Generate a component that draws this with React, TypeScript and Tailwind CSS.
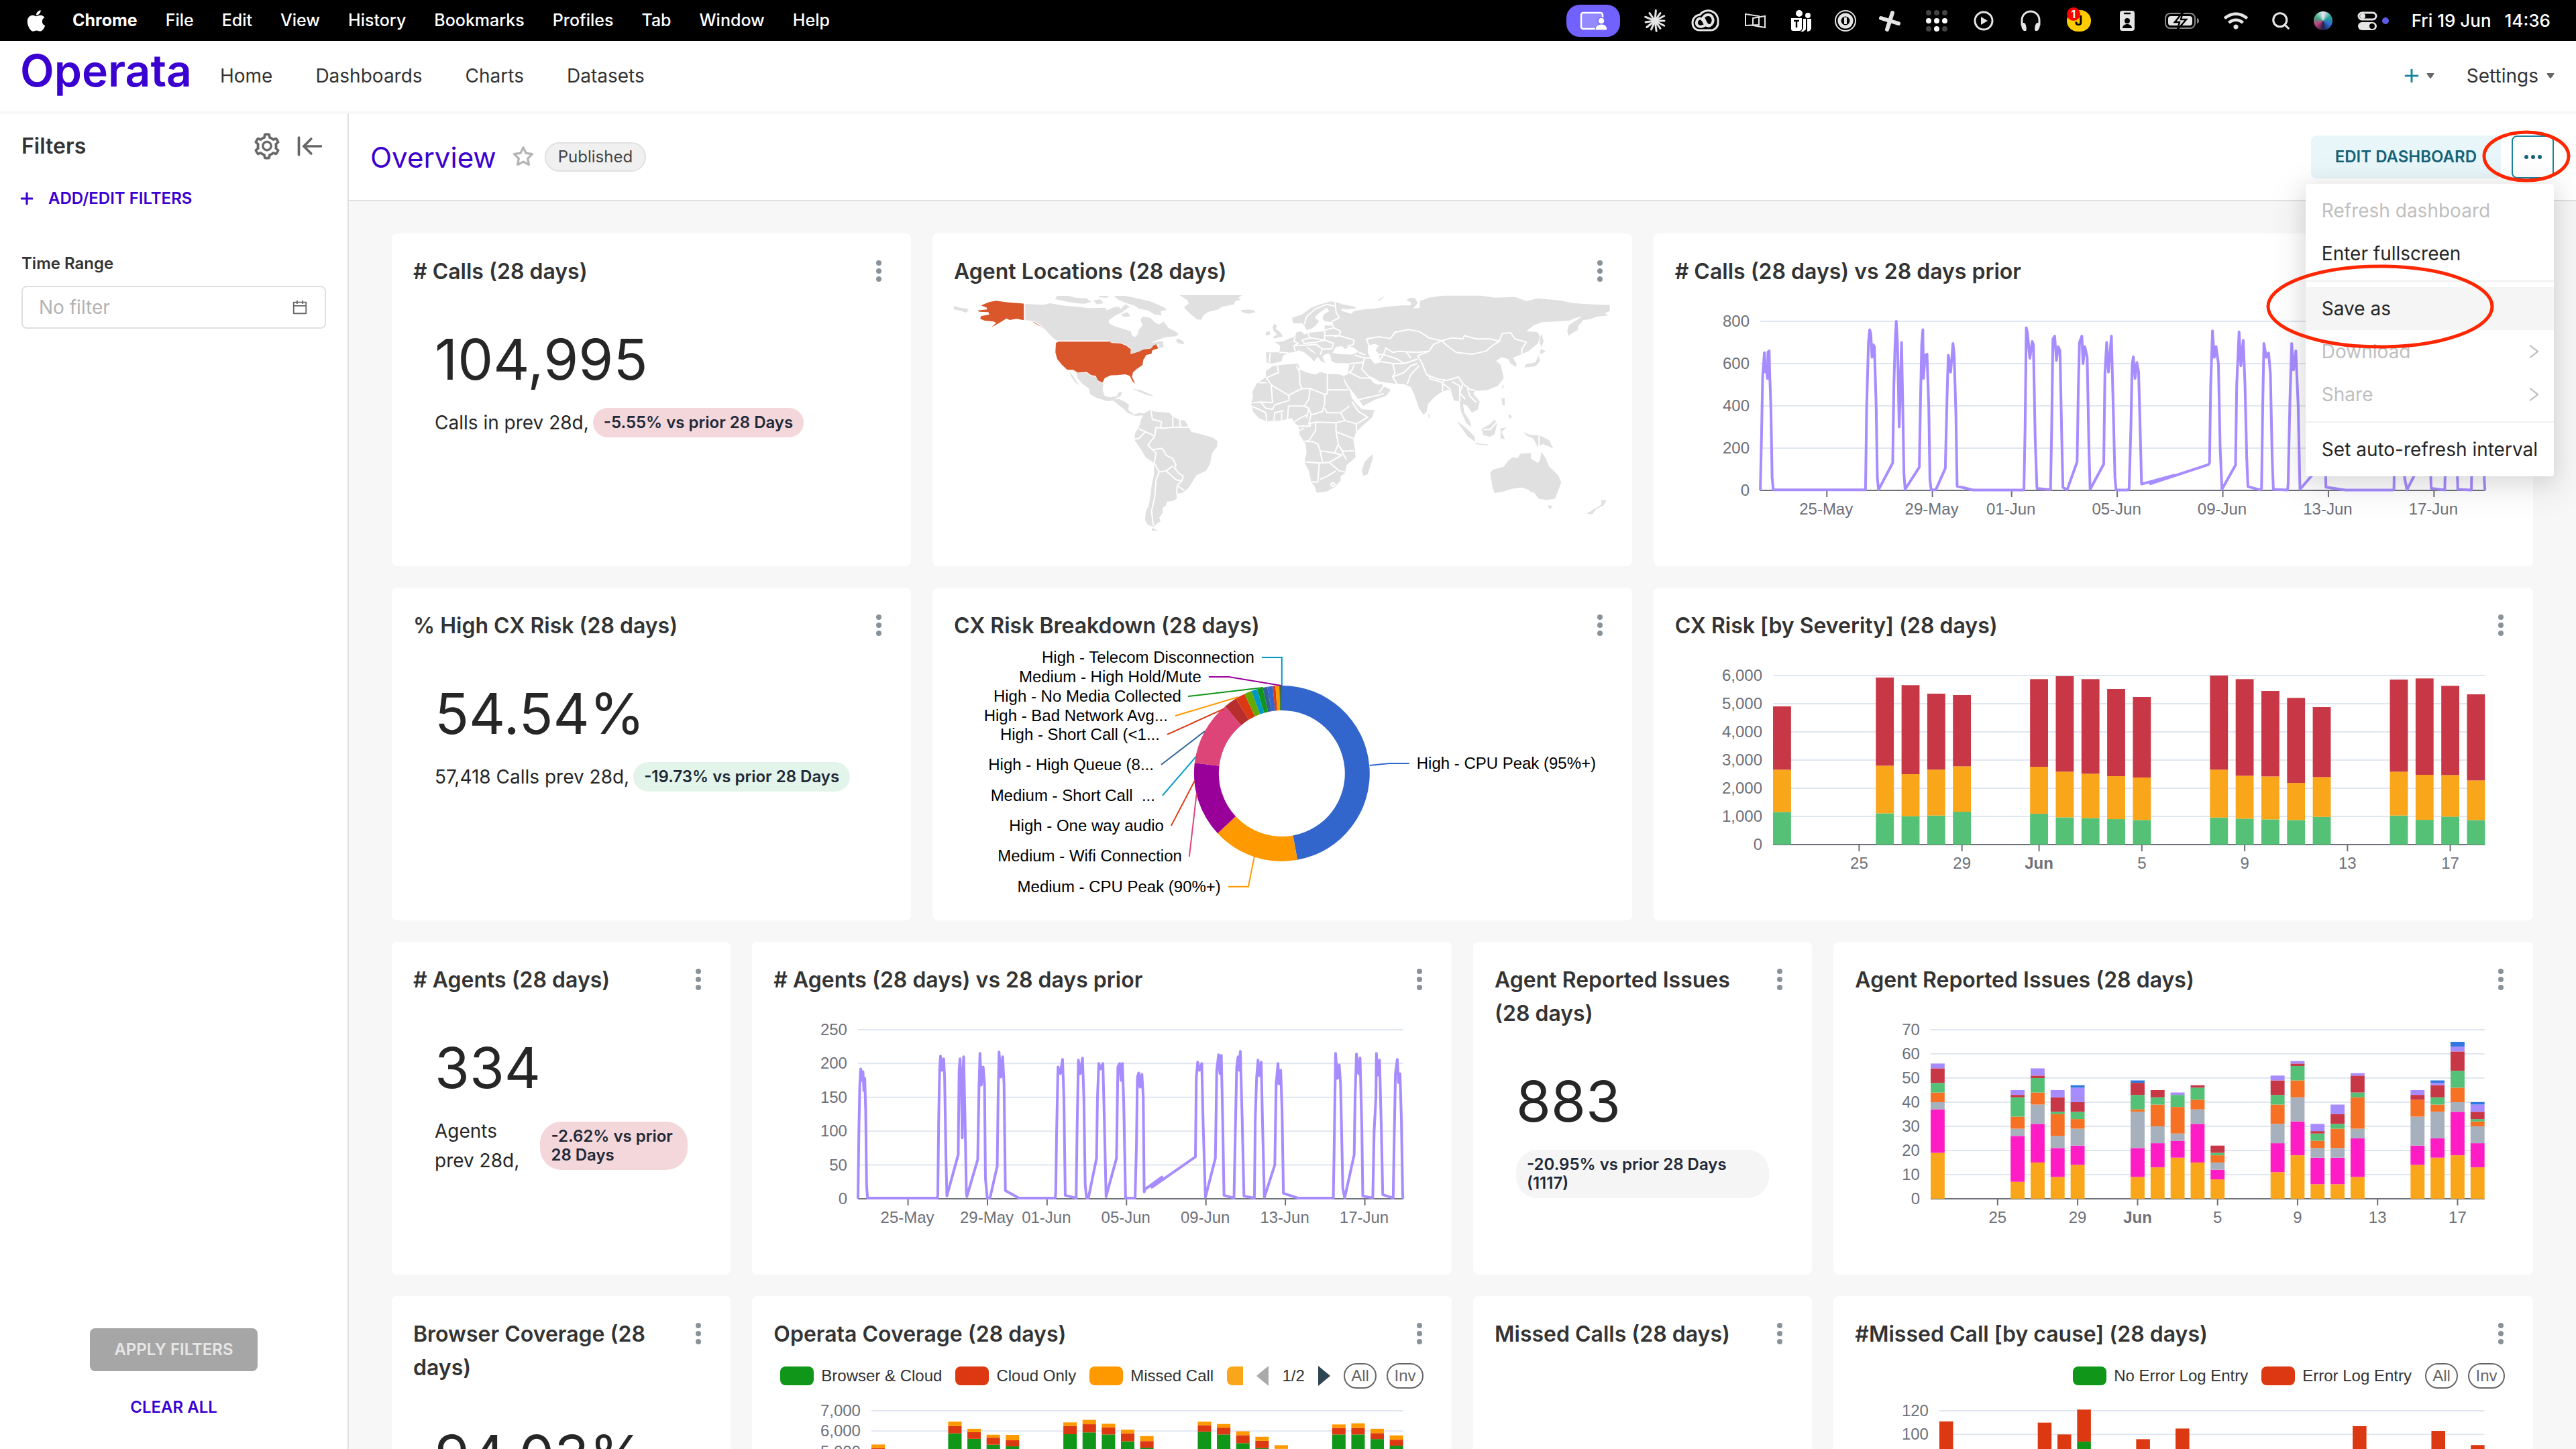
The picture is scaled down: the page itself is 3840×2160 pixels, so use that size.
import type { ReactNode } from 'react';
import { ArrowLeftToLine, Search } from 'lucide-react';
import { AiOutlineCalendar, AiOutlinePlus, AiOutlineRight, AiOutlineSetting, AiOutlineStar } from 'react-icons/ai';
import { FaApple, FaWifi } from 'react-icons/fa';

const MAC_MENU = ['File', 'Edit', 'View', 'History', 'Bookmarks', 'Profiles', 'Tab', 'Window', 'Help'];
const NAV = ['Home', 'Dashboards', 'Charts', 'Datasets'];

const GREEN = '#54c176';
const AMBER = '#faa61a';
const RED = '#c83745';
const VIOLET = '#a78cff';

// Index 0 is 22 May. Weekends and holidays have no rows.
type Row = { day: number; tops: number[] };

const SEVERITY: Row[] = [
  { day: 0, tops: [1159, 2659, 4905] },
  { day: 4, tops: [1111, 2802, 5929] },
  { day: 5, tops: [1008, 2500, 5659] },
  { day: 6, tops: [1032, 2659, 5357] },
  { day: 7, tops: [1167, 2778, 5310] },
  { day: 10, tops: [1095, 2762, 5873] },
  { day: 11, tops: [968, 2587, 5976] },
  { day: 12, tops: [944, 2516, 5873] },
  { day: 13, tops: [905, 2429, 5524] },
  { day: 14, tops: [873, 2381, 5238] },
  { day: 17, tops: [960, 2659, 6000] },
  { day: 18, tops: [920, 2444, 5873] },
  { day: 19, tops: [897, 2421, 5452] },
  { day: 20, tops: [873, 2190, 5206] },
  { day: 21, tops: [984, 2397, 4881] },
  { day: 24, tops: [1032, 2587, 5857] },
  { day: 25, tops: [880, 2476, 5897] },
  { day: 26, tops: [992, 2468, 5635] },
  { day: 27, tops: [873, 2278, 5333] },
];

const ISSUES: Row[] = [
  { day: 0, tops: [19, 37, 40, 44, 48, 54, 56] },
  { day: 4, tops: [7, 26, 29, 34, 42, 43, 45] },
  { day: 5, tops: [15, 31, 39, 44, 50, 51, 54] },
  { day: 6, tops: [9, 21, 26, 35, 36, 42, 45] },
  { day: 7, tops: [14, 22, 29, 33, 36, 40, 46, 47] },
  { day: 10, tops: [9, 21, 36, 37, 43, 48, 48, 49] },
  { day: 11, tops: [13, 23, 30, 39, 42, 45] },
  { day: 12, tops: [17, 24, 27, 38, 43, 43, 44] },
  { day: 13, tops: [15, 31, 37, 41, 46, 47] },
  { day: 14, tops: [8, 12, 15, 18, 19, 22] },
  { day: 17, tops: [11, 23, 31, 39, 43, 49, 51] },
  { day: 18, tops: [18, 32, 42, 49, 55, 56, 57] },
  { day: 19, tops: [6, 17, 21, 24, 27, 28, 31] },
  { day: 20, tops: [6, 17, 21, 29, 31, 35, 39] },
  { day: 21, tops: [9, 25, 29, 42, 44, 51, 52] },
  { day: 24, tops: [14, 22, 34, 41, 41, 43, 45] },
  { day: 25, tops: [17, 25, 36, 39, 42, 47, 48, 49] },
  { day: 26, tops: [18, 36, 40, 46, 53, 61, 63, 65] },
  { day: 27, tops: [13, 23, 30, 32, 33, 36, 39, 40] },
];

const COVERAGE: Row[] = [
  { day: 0, tops: [4900, 5157, 5337] },
  { day: 4, tops: [5888, 6247, 6461] },
  { day: 5, tops: [5618, 5944, 6112] },
  { day: 6, tops: [5326, 5674, 5820] },
  { day: 7, tops: [5247, 5551, 5809] },
  { day: 10, tops: [5843, 6247, 6427] },
  { day: 11, tops: [5933, 6337, 6551] },
  { day: 12, tops: [5831, 6180, 6360] },
  { day: 13, tops: [5494, 5888, 6067] },
  { day: 14, tops: [5180, 5506, 5753] },
  { day: 17, tops: [5966, 6292, 6461] },
  { day: 18, tops: [5831, 6169, 6348] },
  { day: 19, tops: [5404, 5798, 5989] },
  { day: 20, tops: [5157, 5517, 5719] },
  { day: 21, tops: [4800, 5124, 5303] },
  { day: 24, tops: [5831, 6157, 6326] },
  { day: 25, tops: [5831, 6146, 6382] },
  { day: 26, tops: [5607, 5899, 6112] },
  { day: 27, tops: [5281, 5573, 5787] },
];

const MISSED: Row[] = [
  { day: 0, tops: [60, 111] },
  { day: 4, tops: [40, 70] },
  { day: 5, tops: [62, 110] },
  { day: 6, tops: [50, 100] },
  { day: 7, tops: [94, 121] },
  { day: 10, tops: [40, 96] },
  { day: 11, tops: [40, 75] },
  { day: 12, tops: [50, 105] },
  { day: 17, tops: [40, 78] },
  { day: 21, tops: [50, 107] },
  { day: 25, tops: [50, 103] },
  { day: 27, tops: [40, 91] },
];

// Flat [slot, value] pairs, one slot is about half an hour.
const CALLS_LINE = [
  0, 0, 2, 250, 4, 540, 7, 652, 9, 560, 10, 600, 12, 530, 13, 655, 15, 660, 16, 540, 17, 470, 18, 380, 20, 60, 22, 3, 178, 3,
  180, 400, 183, 700, 185, 760, 187, 740, 189, 630, 191, 690, 193, 680, 196, 400, 198, 60, 200, 3,
  224, 130, 226, 500, 228, 690, 230, 800, 232, 700, 235, 300, 237, 500, 239, 700, 241, 400, 243, 80, 245, 5,
  269, 110, 271, 420, 273, 690, 275, 760, 276, 530, 279, 640, 282, 645, 285, 400, 287, 50, 289, 3, 297, 3,
  313, 105, 316, 450, 318, 640, 322, 560, 326, 695, 328, 640, 331, 350, 333, 20, 345, 12, 360, 2, 445, 2,
  446, 3, 448, 300, 450, 770, 452, 745, 456, 625, 460, 705, 462, 690, 465, 250, 468, 10, 490, 3,
  491, 5, 493, 300, 495, 715, 498, 730, 501, 615, 504, 680, 507, 660, 510, 250, 512, 15, 519, 2,
  536, 135, 538, 480, 540, 700, 544, 730, 546, 600, 549, 680, 553, 630, 556, 200, 558, 5,
  581, 125, 583, 550, 586, 700, 589, 560, 594, 730, 597, 400, 600, 60, 602, 2, 622, 2,
  624, 10, 627, 300, 629, 590, 631, 632, 634, 530, 637, 605, 640, 560, 643, 250, 645, 30, 700, 72, 660, 32, 758, 122,
  760, 130, 762, 500, 765, 755, 768, 630, 771, 680, 775, 600, 778, 200, 781, 5,
  804, 120, 806, 500, 810, 750, 813, 590, 817, 710, 820, 500, 823, 150, 825, 18, 846, 2,
  848, 10, 850, 400, 852, 695, 856, 630, 860, 650, 863, 550, 866, 150, 868, 5, 892, 2,
  893, 30, 896, 420, 899, 695, 902, 570, 906, 660, 910, 400, 913, 5,
  936, 80, 939, 500, 943, 650, 948, 600, 952, 500, 957, 15, 990, 2, 1070, 2,
  1072, 5, 1075, 500, 1080, 680, 1086, 600, 1090, 60, 1094, 2, 1110, 90, 1117, 600, 1122, 700, 1128, 600, 1135, 10, 1158, 2,
  1162, 500, 1167, 680, 1174, 600, 1180, 5, 1203, 2, 1206, 500, 1212, 650, 1219, 600, 1225, 40, 1226, 0,
];

const AGENTS_LINE = [
  0, 0, 2, 100, 4, 168, 6, 192, 9, 175, 11, 188, 13, 160, 15, 178, 17, 130, 19, 20, 21, 1, 175, 1,
  176, 5, 178, 120, 180, 190, 182, 211, 185, 190, 189, 207, 191, 180, 194, 60, 196, 4,
  221, 65, 223, 190, 225, 207, 228, 165, 230, 90, 231, 180, 233, 210, 236, 120, 239, 10, 240, 3,
  264, 58, 267, 170, 269, 215, 272, 168, 276, 195, 279, 170, 281, 30, 285, 1, 291, 1,
  307, 48, 309, 150, 311, 217, 315, 180, 319, 210, 322, 170, 325, 12, 355, 1, 435, 1,
  436, 10, 438, 100, 441, 195, 446, 185, 451, 206, 454, 150, 457, 5, 481, 1, 483, 100, 486, 205, 490, 185, 495, 208, 498, 150, 501, 20, 504, 1, 508, 1,
  526, 60, 528, 150, 531, 200, 535, 192, 540, 200, 543, 120, 547, 3,
  570, 60, 573, 195, 577, 200, 580, 175, 583, 200, 586, 140, 590, 1, 611, 1,
  614, 80, 616, 180, 619, 186, 622, 165, 626, 184, 629, 150, 631, 10, 633, 14, 670, 32, 648, 17,
  744, 62, 746, 180, 749, 202, 753, 190, 758, 200, 761, 110, 766, 2,
  788, 60, 791, 190, 795, 213, 798, 185, 801, 212, 804, 120, 807, 5, 829, 1,
  832, 100, 835, 195, 838, 210, 841, 190, 843, 218, 847, 120, 851, 4, 874, 1, 876, 120, 879, 180, 882, 205, 885, 182, 889, 202, 892, 110, 896, 2,
  919, 50, 922, 170, 926, 200, 928, 170, 932, 190, 935, 130, 938, 8, 970, 1, 1048, 1,
  1050, 80, 1053, 215, 1057, 178, 1061, 198, 1064, 170, 1069, 15, 1073, 1,
  1094, 65, 1096, 150, 1099, 214, 1104, 185, 1107, 208, 1111, 100, 1113, 4, 1135, 1,
  1138, 100, 1142, 150, 1143, 215, 1146, 183, 1150, 205, 1154, 100, 1157, 6, 1180, 1,
  1182, 80, 1185, 185, 1189, 206, 1192, 172, 1195, 185, 1198, 120, 1201, 3, 1202, 0,
];

const PIE = [
  { end: 169.8, color: '#3366cc' },
  { end: 227, color: '#ff9900' },
  { end: 276.9, color: '#990099' },
  { end: 319.8, color: '#dd4477' },
  { end: 328.5, color: '#b82e2e' },
  { end: 334.8, color: '#dc3912' },
  { end: 339.7, color: '#66aa00' },
  { end: 343.7, color: '#0099c6' },
  { end: 347.4, color: '#109618' },
  { end: 350.5, color: '#316395' },
  { end: 354, color: '#3366cc' },
  { end: 355.8, color: '#dc3912' },
  { end: 358.3, color: '#ff9900' },
  { end: 359.2, color: '#109618' },
  { end: 360, color: '#990099' },
];

const PIE_LABELS = [
  { text: 'High - Telecom Disconnection', x: 448, y: 22, line: '459,22 489,22 489,64', color: '#0099c6' },
  { text: 'Medium - High Hold/Mute', x: 369, y: 51, line: '380,51 410,51 488,64', color: '#990099' },
  { text: 'High - No Media Collected', x: 339, y: 80, line: '349,80 461,67', color: '#109618' },
  { text: 'High - Bad Network Avg...', x: 319, y: 109, line: '330,109 424,81', color: '#ff9900' },
  { text: 'High - Short Call (<1...', x: 307, y: 137, line: '318,137 402,99', color: '#dc3912' },
  { text: 'High - High Queue (8...', x: 298, y: 182, line: '309,182 374,132', color: '#316395' },
  { text: 'Medium - Short Call\u00a0 ...', x: 300, y: 228, line: '311,228 361,170', color: '#0099c6' },
  { text: 'High - One way audio', x: 313, y: 273, line: '324,273 359,206', color: '#dc3912' },
  { text: 'Medium - Wifi Connection', x: 340, y: 318, line: '351,319 362,224', color: '#dd4477' },
  { text: 'Medium - CPU Peak (90%+)', x: 398, y: 364, line: '409,364 439,364 448,319', color: '#ff9900' },
];

const LAND = [
  // North America
  'M218,333 L258,337 275,330 300,340 330,345 360,352 395,350 400,362 412,350 425,345 430,355 440,335 450,345 432,372 418,385 405,405 403,418 415,432 440,448 452,455 455,475 462,482 468,468 470,448 478,430 474,405 478,390 495,395 505,415 515,425 525,412 535,440 550,455 558,468 552,478 530,482 510,495 497,508 520,500 525,505 512,515 505,520 498,532 485,534 475,545 455,558 450,545 452,530 440,515 430,508 405,505 403,497 290,497 280,485 270,462 262,445 252,425 240,410 218,405Z',
  'M285,312 L290,297 315,297 330,305 355,308 365,325 350,332 330,330 305,320Z M370,318 L385,312 392,330 378,335Z M380,297 L405,297 398,306 384,304Z',
  'M415,297 L440,297 470,310 495,322 505,330 525,348 532,360 518,365 520,385 505,380 490,362 470,355 462,342 440,328 425,315Z M430,380 L445,370 452,388 438,392Z M450,322 L465,330 455,336Z',
  'M552,498 L556,488 568,500 570,515 556,508Z M515,505 L522,502 525,525 515,532Z',
  'M560,294 L698,294 690,305 695,315 683,320 680,335 655,345 645,358 622,370 612,385 608,404 598,402 585,380 572,355 570,345 580,332 578,318Z',
  'M693,362 L710,358 725,362 727,370 712,377 700,372Z',
  'M62,341 L75,350 90,353 95,362 88,372 75,362 62,358Z',
  'M332,640 L355,642 365,656 378,660 384,680 392,690 390,720 395,745 408,752 422,745 426,728 433,726 430,745 420,755 415,765 400,768 375,752 362,735 360,712 345,690 335,665Z',
  'M317,635 L325,655 332,680 340,698 330,685 320,655Z',
  'M412,762 L425,758 440,772 448,785 447,808 460,828 472,820 485,825 480,832 462,834 445,820 435,800 425,785Z',
  'M456,712 L475,720 498,740 503,746 490,742 470,726Z',
  // South America
  'M483,820 L495,808 505,815 538,820 545,838 560,852 572,855 580,885 585,905 605,915 632,930 643,945 643,970 632,1000 627,1050 618,1080 597,1100 588,1130 578,1160 565,1180 553,1180 554,1205 545,1215 532,1218 530,1235 523,1245 522,1270 515,1290 518,1305 508,1320 502,1330 490,1322 484,1300 485,1265 492,1235 495,1200 498,1150 503,1100 504,1045 485,1020 475,985 460,940 462,910 470,885 475,850Z',
  'M500,1335 L512,1348 498,1348Z',
  // Africa
  'M765,612 L790,605 820,600 825,615 822,625 840,640 860,650 870,638 885,645 912,648 920,655 925,690 935,720 940,755 950,780 962,805 990,808 985,840 968,870 950,905 943,940 947,985 948,1020 928,1055 925,1090 915,1105 915,1125 900,1155 885,1172 862,1178 858,1150 850,1130 845,1080 835,1042 840,1000 838,960 825,920 822,880 812,862 808,845 798,848 785,855 752,858 735,845 722,815 718,785 722,745 720,727 730,690 750,660 750,635Z',
  'M985,1005 L986,1025 975,1095 965,1103 962,1080 968,1040Z',
  // Europe and Asia
  'M893,322 L905,325 920,335 945,345 950,352 930,358 920,355 915,362 930,372 938,378 945,365 965,358 985,355 1020,345 1050,340 1070,340 1070,325 1060,318 1068,305 1080,308 1085,330 1075,355 1090,350 1090,320 1110,305 1140,296 1225,296 1255,305 1300,302 1325,320 1350,308 1400,318 1430,330 1470,335 1509,338 1509,365 1498,375 1505,385 1480,390 1465,402 1450,405 1445,420 1440,430 1438,450 1425,465 1418,477 1415,455 1418,430 1440,400 1448,388 1430,398 1420,408 1390,412 1360,415 1340,430 1325,455 1350,460 1355,480 1350,510 1330,545 1315,558 1300,570 1295,575 1303,600 1302,615 1290,600 1285,580 1270,572 1258,588 1268,605 1272,640 1275,665 1262,700 1240,718 1220,722 1212,720 1208,735 1222,770 1218,805 1205,820 1195,790 1185,780 1188,820 1200,855 1203,885 1192,865 1180,810 1178,770 1165,765 1158,715 1140,725 1125,745 1108,780 1105,815 1098,830 1088,800 1078,740 1070,705 1055,692 1035,690 1015,685 1000,680 985,660 975,655 985,680 990,690 1000,695 1005,690 1010,702 1022,712 1025,720 1015,745 990,762 965,790 958,770 945,735 930,695 920,655 930,650 935,600 925,598 905,598 895,590 893,568 890,555 880,560 875,570 882,598 872,590 862,560 855,545 845,530 838,525 850,545 868,568 862,575 857,592 850,575 835,550 822,540 815,548 800,552 788,565 785,590 765,600 752,595 750,550 780,550 782,520 770,505 790,500 800,490 815,478 818,460 828,455 835,470 845,462 880,455 880,430 895,430 895,415 880,410 875,400 878,380 890,365 885,350 870,370 862,385 858,395 868,410 860,430 850,445 840,450 835,430 830,420 810,420 808,395 830,380 850,350 870,335Z',
  'M768,422 L775,430 772,445 782,460 788,478 770,488 765,482 775,470 768,455 765,440Z M750,462 L758,452 760,470 750,475Z',
  'M998,315 L1015,294 1005,312 1000,320Z',
  'M1108,822 L1113,835 1110,846Z M1172,858 L1190,885 1210,925 1212,950 1195,925Z M1210,955 L1240,962 1242,967 1215,962Z',
  'M1226,892 L1245,870 1255,850 1260,870 1255,915 1245,928 1230,920Z M1268,890 L1282,885 1270,905 1278,940 1268,935Z',
  'M1270,755 L1277,755 1277,790 1272,785Z M1285,825 L1293,835 1288,850Z M1270,712 L1274,692 1275,705Z',
  'M1318,908 L1335,920 1355,922 1375,942 1384,980 1362,960 1350,972 1340,935 1325,922Z',
  'M1356,535 L1368,545 1355,560Z M1352,562 L1355,590 1345,612 1320,618 1325,602 1345,595Z M1358,465 L1363,500 1358,530 1354,500Z',
  // Oceania
  'M1245,1090 L1250,1075 1275,1062 1285,1035 1295,1018 1305,1025 1312,1003 1335,1000 1335,1025 1350,1045 1355,1030 1358,995 1368,1025 1375,1060 1395,1100 1402,1130 1395,1170 1388,1205 1370,1210 1352,1205 1342,1178 1335,1175 1330,1165 1315,1155 1295,1160 1275,1172 1255,1180 1250,1150Z',
  'M1370,1236 L1383,1236 1378,1252Z M1490,1210 L1502,1212 1495,1235 1480,1250 1470,1275 1458,1272 1475,1250 1490,1232Z',
];

const SEAS = [
  'M897,552 L905,525 918,522 925,535 935,522 945,530 955,548 940,560 915,558Z',
  'M975,520 L990,512 1000,520 992,540 1000,560 1002,595 990,602 982,580 975,550Z',
];

const BORDERS = [
  'M580,885 L545,885 520,890 508,885 505,925 490,965 500,985 522,980 530,1010 545,1025 552,1055 548,1065 558,1090 568,1105 565,1125 555,1145 570,1168',
  'M504,1045 L508,1000 500,985 M504,1045 L515,1085 530,1080 545,1058 M515,1085 L508,1120 505,1200 498,1260 502,1325 M470,892 L485,905 470,935 460,938',
  'M497,812 L500,850 520,860 518,890 M545,838 L545,885 M560,852 L562,885 M485,905 L503,922 M530,1080 L552,1120 565,1125 M553,1180 L555,1145',
  'M735,686 L752,686 M776,612 L778,640 750,665 M752,665 L762,695 800,742 830,712 825,690 825,640 818,612 M762,695 L765,775 738,772 722,775',
  'M800,742 L802,765 770,785 765,805 M830,712 L848,712 880,738 886,735 886,645 M886,718 L932,718 M848,712 L845,760 835,790 800,790',
  'M880,738 L880,780 875,815 850,830 845,800 835,790 M880,800 L885,820 915,820 935,790 M915,820 L925,855 905,865 860,862 845,870 850,830',
  'M925,855 L950,870 975,840 955,815 940,770 M950,870 L950,905 M905,865 L905,905 943,935 M860,862 L860,900 845,945 835,948',
  'M838,948 L855,950 865,960 870,990 902,1000 910,960 905,905 M835,1040 L870,1045 890,1042 918,1010 902,1000 M870,990 L875,1040',
  'M945,990 L920,992 910,965 M918,992 L928,1030 M890,1042 L912,1080 925,1085 M868,1045 L865,1130 850,1130 M870,1118 L885,1105 905,1080',
  'M768,858 L770,820 790,810 M785,855 L785,820 M798,850 L800,790 M840,845 L845,800 M752,858 L750,820 735,805 718,790 M822,880 L848,880 848,862',
  'M898,1132 L903,1140 898,1150 893,1142Z M765,805 L750,800 740,775 M822,900 L835,890 M812,862 L830,840 840,830',
  'M835,425 L840,390 860,355 885,335 905,345 M903,325 L905,370 912,395 895,412',
  'M895,412 L900,440 915,455 912,475 900,480 M900,440 L880,450 M912,475 L945,495 943,515 930,522 M880,475 L912,475 M843,465 L848,485 880,495 880,475 880,455',
  'M848,485 L830,495 835,510 860,505 880,495 900,510 895,535 M815,480 L812,500 822,510 812,520 815,545 M812,520 L840,518 862,515 875,535 895,535 M875,535 L870,560 M760,552 L758,595 M780,550 L800,552',
  'M978,520 L972,490 1000,480 1025,488 1035,460 1065,448 1090,458 1110,485 1138,498 1120,515 1110,545 1085,550 1060,548 1045,545 1030,550 1015,530 1010,560 998,560',
  'M1138,498 L1160,485 1185,490 1188,475 1215,490 1245,490 1265,500 1250,520 1235,545 1205,558 1170,550 1150,520 1138,498 M1265,500 L1272,465 1290,462 1300,490 1325,505 1315,535 1315,560',
  'M1110,545 L1085,565 1095,600 1105,650 1130,670 1150,675 1175,660 1185,690 1200,715 1212,720 M945,562 L968,575 985,575 M955,550 L970,562',
  'M968,575 L965,600 962,625 978,660 M1010,560 L1000,590 1030,600 1055,600 1085,580 M1010,560 L1040,580 1055,600 M1060,548 L1070,575 M1030,600 L1035,640 1030,660 1040,692',
  'M1030,660 L1055,640 1070,610 1085,600 M1062,692 L1070,650 1088,610 M1158,715 L1140,690 1145,670 M1110,655 L1112,668 1140,685 1140,725 M1160,680 L1178,700 1178,770',
  'M1185,690 L1178,730 1190,760 M1195,712 L1200,745 1215,775 M935,600 L965,595 M945,605 L940,630 925,650 M935,640 L960,665 985,665 M955,762 L990,745 1010,735 M1010,702 L1000,730 M1353,922 L1353,972 M1230,895 L1245,895 1258,865',
];

function WorldMap() {
  return (
    <svg viewBox="0 0 979 382" className="block h-auto w-full" role="img" aria-label="Agent locations by country">
      <g transform="translate(-42 -88) scale(0.676 0.3333)" strokeLinejoin="round">
        {LAND.map((d) => (
          <path key={d} d={d} fill="#e0e0e0" />
        ))}
        {SEAS.map((d) => (
          <path key={d} d={d} fill="#fff" />
        ))}
        {BORDERS.map((d) => (
          <path key={d} d={d} fill="none" stroke="#fff" strokeWidth="2" vectorEffect="non-scaling-stroke" />
        ))}
        <path
          fill="#d9572b"
          d="M217,332 L190,328 175,325 155,319 140,325 122,340 135,350 135,358 115,362 118,368 138,370 140,380 122,388 120,400 130,408 150,412 155,418 145,438 165,415 178,398 185,405 200,400 217,406Z M234,412 L242,418 262,446 254,436Z"
        />
        <path
          fill="#d9572b"
          d="M293,502 L405,502 410,508 430,510 442,520 452,535 452,558 470,547 480,537 497,533 502,520 508,514 513,532 500,540 498,556 486,562 483,575 480,582 478,607 465,625 457,640 455,660 462,690 456,680 450,655 440,648 422,652 408,653 395,665 390,685 380,675 375,655 365,652 355,638 335,640 325,628 312,628 300,605 290,580 286,550 287,508Z"
        />
        <path d="M218,332 L218,406" stroke="#fff" strokeWidth="2" vectorEffect="non-scaling-stroke" />
      </g>
    </svg>
  );
}

function polar(angle: number, r: number) {
  const a = (angle * Math.PI) / 180;
  return `${489 + r * Math.sin(a)} ${195 - r * Math.cos(a)}`;
}

function Donut() {
  return (
    <svg viewBox="0 0 979 382" className="block h-auto w-full font-['Liberation_Sans',sans-serif]">
      {PIE.map((s, i) => {
        const start = i === 0 ? 0 : PIE[i - 1].end;
        const large = s.end - start > 180 ? 1 : 0;
        return (
          <path
            key={s.end}
            fill={s.color}
            d={`M${polar(start, 131)} A131 131 0 ${large} 1 ${polar(s.end, 131)} L${polar(s.end, 94)} A94 94 0 ${large} 0 ${polar(start, 94)}Z`}
          />
        );
      })}
      {PIE_LABELS.map((l) => (
        <g key={l.text}>
          <polyline points={l.line} fill="none" stroke={l.color} strokeWidth="2" />
          <text x={l.x} y={l.y + 8} textAnchor="end" fontSize="24" fill="#000">
            {l.text}
          </text>
        </g>
      ))}
      <polyline points="620,183 649,180 679,180" fill="none" stroke="#3366cc" strokeWidth="2" />
      <text x="690" y="188" fontSize="24" fill="#000">
        High - CPU Peak (95%+)
      </text>
    </svg>
  );
}

type AxisProps = { width: number; left: number; top?: number; max: number; step: number };

function YAxis({ width, left, top = 49, max, step }: AxisProps) {
  const ticks = Array.from({ length: max / step + 1 }, (_, i) => i * step);
  const zero = top === 49 ? 301 : 245;
  return (
    <>
      {ticks.map((t) => {
        const y = zero - (t / max) * (zero - top);
        return (
          <g key={t}>
            <line x1={left} x2={width - 40} y1={y} y2={y} stroke={t === 0 ? '#6e7079' : '#e0e6f1'} strokeWidth="2" />
            <text x={left - 16} y={y + 8} textAnchor="end" fontSize="24" fill="#6e7079">
              {t.toLocaleString('en-US')}
            </text>
          </g>
        );
      })}
    </>
  );
}

function BarChart({ colors, data, ...axis }: AxisProps & { colors: string[]; data: Row[] }) {
  const { width, left, top = 49, max } = axis;
  const zero = top === 49 ? 301 : 245;
  const slot = (width - 40 - left) / 27.7;
  const bar = slot * 0.7;
  const toY = (v: number) => zero - (v / max) * (zero - top);
  const labels: [number, string][] = [[3, '25'], [7, '29'], [10, 'Jun'], [14, '5'], [18, '9'], [22, '13'], [26, '17']];
  return (
    <svg viewBox={`0 0 ${width} 382`} className="block h-auto w-full font-['Liberation_Sans',sans-serif]">
      <YAxis {...axis} />
      {labels.map(([day, label]) => {
        const x = left + bar / 2 + day * slot;
        return (
          <g key={label}>
            <line x1={x} x2={x} y1={zero} y2={zero + 10} stroke="#6e7079" strokeWidth="2" />
            <text x={x} y={zero + 36} textAnchor="middle" fontSize="24" fontWeight={label === 'Jun' ? 700 : 400} fill="#6e7079">
              {label}
            </text>
          </g>
        );
      })}
      {data.map(({ day, tops }) =>
        tops.map((v, i) => (
          <rect
            key={`${day}-${i}`}
            x={left + day * slot}
            y={toY(v)}
            width={bar}
            height={toY(i === 0 ? 0 : tops[i - 1]) - toY(v)}
            fill={colors[i]}
          />
        )),
      )}
    </svg>
  );
}

function LineChart({ points, span, ...axis }: AxisProps & { points: number[]; span: number }) {
  const { width, left, max } = axis;
  const plot = width - 40 - left;
  const day = plot / 27.45;
  const coords: string[] = [];
  for (let i = 0; i < points.length; i += 2) {
    coords.push(`${left + (points[i] / span) * plot},${301 - (points[i + 1] / max) * 252}`);
  }
  const labels: [number, string][] = [
    [0, '25-May'], [4, '29-May'], [7, '01-Jun'], [11, '05-Jun'], [15, '09-Jun'], [19, '13-Jun'], [23, '17-Jun'],
  ];
  return (
    <svg viewBox={`0 0 ${width} 382`} className="block h-auto w-full font-['Liberation_Sans',sans-serif]">
      <YAxis {...axis} />
      {labels.map(([n, label]) => {
        const x = left + (n + 2.52) * day;
        return (
          <g key={label}>
            <line x1={x} x2={x} y1={301} y2={311} stroke="#6e7079" strokeWidth="2" />
            <text x={x - 1} y={337} textAnchor="middle" fontSize="24" fill="#6e7079">
              {label}
            </text>
          </g>
        );
      })}
      <polyline points={coords.join(' ')} fill="none" stroke={VIOLET} strokeWidth="4" strokeLinejoin="round" />
    </svg>
  );
}

function Card({ title, span, children }: { title: string; span: string; children?: ReactNode }) {
  return (
    <section className={`h-[496px] rounded-lg bg-white p-8 ${span}`}>
      <header className="flex items-start justify-between">
        <h2 className="text-[32px] leading-[50px] font-semibold text-[#333]">{title}</h2>
        <button type="button" aria-label="More options" className="mt-1 flex w-8 shrink-0 flex-col items-center gap-1 py-1">
          <span className="size-2 rounded-full bg-[#879399]" />
          <span className="size-2 rounded-full bg-[#879399]" />
          <span className="size-2 rounded-full bg-[#879399]" />
        </button>
      </header>
      {children}
    </section>
  );
}

function BigNumber({ value, caption, badge, tone }: { value: string; caption?: string; badge?: string; tone?: string }) {
  return (
    <div className="px-8 text-[#262626]">
      <p className="mt-14 mb-[22px] text-[84px] leading-[100px]">{value}</p>
      <div className="flex items-center gap-1.5">
        {caption && <p className="text-[28px] leading-[44px]">{caption}</p>}
        {badge && (
          <p className={`rounded-[32px] px-4 py-2 text-2xl leading-7 font-semibold text-[#1f2937] ${caption ? '' : 'w-full'} ${tone}`}>
            {badge}
          </p>
        )}
      </div>
    </div>
  );
}

function LegendItem({ color, label }: { color: string; label?: string }) {
  return (
    <button type="button" className="flex shrink-0 items-center gap-[11px]">
      <span className={`h-7 w-[50px] rounded-lg ${color}`} />
      {label}
    </button>
  );
}

function LegendSelectors() {
  return (
    <div className="flex gap-[15px] text-[#666]">
      <button type="button" className="h-[38px] w-[49px] rounded-full border-2 border-[#666] leading-none">
        All
      </button>
      <button type="button" className="h-[38px] w-[55px] rounded-full border-2 border-[#666] leading-none">
        Inv
      </button>
    </div>
  );
}

function Caret() {
  return (
    <svg viewBox="0 0 12 8" className="h-2 w-3" fill="#666">
      <path d="M1.5 0h9a1 1 0 0 1 .8 1.6L6.8 7.4a1 1 0 0 1-1.6 0L.7 1.6A1 1 0 0 1 1.5 0z" />
    </svg>
  );
}

function StatusIcons() {
  return (
    <div className="flex items-center gap-[34px] text-[#e5e5e5]">
      <span className="flex h-12 w-20 items-center justify-center rounded-[20px] bg-[#7161ff]">
        <svg viewBox="0 0 40 28" className="h-7 w-10">
          <rect x="2" y="2" width="32" height="24" rx="3" fill="#9589ff" stroke="#fff" strokeWidth="2.5" />
          <circle cx="32" cy="14" r="5" fill="#fff" stroke="#7161ff" strokeWidth="1.5" />
          <path d="M23 28c0-6 4-9 9-9s9 3 9 9z" fill="#fff" stroke="#7161ff" strokeWidth="1" />
        </svg>
      </span>
      <svg viewBox="0 0 36 36" className="size-9" stroke="currentColor" strokeWidth="3" strokeLinecap="round">
        {[5, 35, 62, 90, 118, 145, 172, 203, 232, 262, 292, 325].map((a, i) => (
          <line key={a} x1="18" y1="18" x2="18" y2={i % 2 ? 4 : 2.5} transform={`rotate(${a} 18 18)`} />
        ))}
      </svg>
      <svg viewBox="0 0 46 36" className="h-9 w-[46px]" fill="none" stroke="currentColor" strokeWidth="3">
        <path d="M14 32h17a11 11 0 0 0 11-12A15 15 0 0 0 15 9 12 12 0 0 0 4 21c0 6 4 11 10 11z" />
        <path d="M31 25c-5 2-8-1-10-5-2-5-6-7-9-4s-3 8 1 10 8 0 11-3M20 13c4-6 12-5 14 1 2 5-1 10-4 11-4 1-6-3-10-12z" strokeWidth="4" />
      </svg>
      <svg viewBox="0 0 36 28" className="h-7 w-9" fill="none" stroke="currentColor" strokeWidth="2">
        <path d="M3 4l20 3v13L3 21z M14 10l18-3v17l-18-3z" />
      </svg>
      <svg viewBox="0 0 32 34" className="h-[34px] w-8" fill="#fff">
        <circle cx="13" cy="6" r="5" />
        <circle cx="26" cy="9" r="4" />
        <path d="M1 13h16v15a4 4 0 0 1-4 4H4a3 3 0 0 1-3-3z" />
        <path d="M19 14h4v16l-4 3h-4c3-2 4-4 4-7zM25 14h6v13c0 3-2 6-6 6z" />
        <path d="M5 17h8M9 17v10" stroke="#000" strokeWidth="2.5" />
      </svg>
      <svg viewBox="0 0 32 32" className="size-8" fill="none" stroke="currentColor">
        <circle cx="16" cy="16" r="15" strokeWidth="2" />
        <circle cx="16" cy="16" r="9" strokeWidth="5" />
        <path d="M16 11v10" strokeWidth="4" />
      </svg>
      <svg viewBox="0 0 32 32" className="size-8" stroke="currentColor" strokeWidth="6" strokeLinecap="round">
        <path d="M20 4l-8 25M3 12l26 8" />
      </svg>
      <svg viewBox="0 0 40 36" className="h-9 w-10">
        {[6, 18, 30].map((y, r) =>
          [8, 20, 32].map((x, c) => (
            <circle key={`${x}-${y}`} cx={x} cy={y} r="4" fill={r === 1 || (r === 2 && c === 1) ? '#fff' : '#444'} />
          )),
        )}
      </svg>
      <svg viewBox="0 0 32 32" className="size-8">
        <circle cx="16" cy="16" r="13" fill="none" stroke="currentColor" strokeWidth="3" />
        <path d="M12 10l10 6-10 6z" fill="currentColor" />
      </svg>
      <svg viewBox="0 0 40 34" className="h-[34px] w-10">
        <path d="M7 24v-8a13 13 0 0 1 26 0v8" fill="none" stroke="currentColor" strokeWidth="3" />
        <path d="M7 20h3c3 0 5 10 3 12h-3c-3-2-5-8-3-12zM33 20h-3c-3 0-5 10-3 12h3c3-2 5-8 3-12z" fill="currentColor" />
      </svg>
      <span className="relative flex h-8 w-9 items-center justify-center rounded-full bg-[#fc0] text-xl font-bold text-black">
        J
        <span className="absolute -top-1 left-0 flex size-5 items-center justify-center rounded-full bg-[#f00] text-base leading-none text-white">1</span>
      </span>
      <svg viewBox="0 0 40 32" className="h-8 w-10">
        <rect x="9" y="1" width="22" height="30" rx="4" fill="currentColor" />
        <path d="M16 5h8" stroke="#000" strokeWidth="2.5" strokeLinecap="round" />
        <circle cx="20" cy="16" r="4" fill="#000" />
        <path d="M13 27c0-8 14-8 14 0z" fill="#000" />
      </svg>
      <svg viewBox="0 0 56 26" className="h-[26px] w-14">
        <rect x="3" y="2" width="44" height="22" rx="7" fill="none" stroke="#888" strokeWidth="2" />
        <rect x="7" y="6" width="36" height="14" rx="4" fill="currentColor" />
        <path d="M50 9c4 1 4 7 0 8z" fill="#888" />
        <path d="M29 0L17 15h7l-3 11L34 11h-8z" fill="currentColor" stroke="#000" strokeWidth="2.5" />
      </svg>
      <FaWifi className="size-9" />
      <Search className="size-[30px]" strokeWidth={2.5} />
      <span className="size-7 rounded-full bg-[conic-gradient(#e8e8f5,#2aa198,#2d6cd0,#20204a,#c0407a,#3fae8a,#e8e8f5)]" />
      <svg viewBox="0 0 50 30" className="h-[30px] w-[50px]">
        <rect x="5" y="3" width="26" height="10" rx="5" fill="none" stroke="currentColor" strokeWidth="3" />
        <circle cx="11" cy="8" r="4" fill="currentColor" />
        <rect x="4" y="17" width="28" height="12" rx="6" fill="currentColor" />
        <circle cx="25" cy="23" r="4" fill="#000" />
        <circle cx="45" cy="15" r="5" fill="#5e5ce6" />
      </svg>
      <span className="flex gap-5 text-[26px] whitespace-nowrap text-white">
        <span>Fri 19 Jun</span>
        <span>14:36</span>
      </span>
    </div>
  );
}

function MenuItem({ label, disabled, arrow, active, children }: { label: string; disabled?: boolean; arrow?: boolean; active?: boolean; children?: ReactNode }) {
  return (
    <li className="relative">
      <button
        type="button"
        disabled={disabled}
        className={`flex h-16 w-full items-center justify-between gap-4 px-6 whitespace-nowrap ${active ? 'bg-[#f5f5f5]' : ''} ${disabled ? 'text-[#bfbfbf]' : 'text-[#262626]'}`}
      >
        {label}
        {arrow && <AiOutlineRight className="-mr-2 size-7" />}
      </button>
      {children}
    </li>
  );
}

export default function App() {
  return (
    <div className="flex h-screen flex-col overflow-hidden bg-white font-[Inter,'Open_Sans',sans-serif] text-[28px] text-[#333]">
      {/* System bar */}
      <div className="flex h-[61px] shrink-0 items-center justify-between bg-black pr-[38px] pl-9 text-[25px] font-medium text-white">
        <div className="flex items-center gap-[42px]">
          <FaApple className="size-9" />
          <span className="-ml-1.5 font-bold">Chrome</span>
          {MAC_MENU.map((m) => (
            <span key={m}>{m}</span>
          ))}
        </div>
        <StatusIcons />
      </div>

      {/* App header */}
      <header className="flex h-[109px] shrink-0 items-center justify-between border-b-4 border-[#f7f7f7] pr-8 pl-[30px] pb-0.5">
        <div className="flex items-center">
          <a href="/" className="pb-4 text-[66px] leading-none font-semibold text-[#3a00d1]">
            Operata
          </a>
          <nav className="ml-[42px] flex gap-16">
            {NAV.map((n) => (
              <a key={n} href={`/${n.toLowerCase()}`}>
                {n}
              </a>
            ))}
          </nav>
        </div>
        <div className="flex items-center gap-12">
          <button type="button" aria-label="New" className="flex items-center gap-2">
            <AiOutlinePlus className="size-7 text-[#1a85a0]" strokeWidth={30} />
            <Caret />
          </button>
          <button type="button" className="flex items-center gap-3">
            Settings
            <Caret />
          </button>
        </div>
      </header>

      <div className="flex min-h-0 flex-1">
        {/* Filter bar */}
        <aside className="flex w-[520px] shrink-0 flex-col border-r-2 border-[#e0e0e0] px-8 pt-6 pb-[30px]">
          <div className="flex h-12 items-center justify-between">
            <h2 className="text-[32px] font-semibold">Filters</h2>
            <div className="flex items-center gap-5 pr-0.5 text-[#666]">
              <button type="button" aria-label="Filter settings">
                <AiOutlineSetting className="block size-11" strokeWidth={15} />
              </button>
              <button type="button" aria-label="Collapse filters">
                <ArrowLeftToLine className="block size-11" />
              </button>
            </div>
          </div>
          <button type="button" className="mt-[37px] -ml-1 flex h-[34px] items-center gap-5 text-2xl font-semibold text-[#3a00d1]">
            <AiOutlinePlus className="size-6" strokeWidth={60} />
            ADD/EDIT FILTERS
          </button>
          <label htmlFor="time-range" className="mt-16 text-2xl leading-8 font-semibold">
            Time Range
          </label>
          <div className="mt-[17px] flex h-16 items-center rounded-lg border-2 border-[#e0e0e0] px-6">
            <input id="time-range" placeholder="No filter" className="min-w-0 flex-1 outline-none placeholder:text-[#b2b2b2]" />
            <AiOutlineCalendar className="size-[26px] text-[#666]" />
          </div>
          <div className="mt-auto flex flex-col items-center gap-[22px] text-2xl font-semibold">
            <button type="button" disabled className="h-16 rounded-lg bg-[#a6a6a6] px-9 text-[#e6e6e6]">
              APPLY FILTERS
            </button>
            <button type="button" className="h-16 px-9 text-[#3a00d1]">
              CLEAR ALL
            </button>
          </div>
        </aside>

        <main className="flex min-w-0 flex-1 flex-col bg-[#f7f7f7]">
          {/* Dashboard title */}
          <div className="flex h-[130px] shrink-0 items-center justify-between border-b-2 border-[#e0e0e0] bg-white pr-[33px] pl-8">
            <div className="flex items-center">
              <h1 className="text-[42px] text-[#3a00d1]">Overview</h1>
              <button type="button" aria-label="Favorite" className="ml-[22px]">
                <AiOutlineStar className="block size-9 text-[#b2b2b2]" strokeWidth={20} />
              </button>
              <span className="ml-3.5 flex h-11 items-center rounded-full border-2 border-[#e0e0e0] bg-[#f0f0f0] px-[18px] text-2xl text-[#444]">
                Published
              </span>
            </div>
            <div className="flex gap-4">
              <button type="button" className="h-16 rounded-lg bg-[#e9f6f9] px-9 text-2xl font-semibold text-[#156378]">
                EDIT DASHBOARD
              </button>
              <div className="relative">
                <button
                  type="button"
                  aria-label="Dashboard menu"
                  className="flex h-16 w-[63px] items-center justify-center gap-1 rounded-lg border-2 border-[#1a85a0]"
                >
                  <span className="size-1.5 rounded-full bg-[#156378]" />
                  <span className="size-1.5 rounded-full bg-[#156378]" />
                  <span className="size-1.5 rounded-full bg-[#156378]" />
                </button>
                <svg viewBox="0 0 132 78" className="pointer-events-none absolute -top-2 -left-11 z-20 h-[78px] w-[132px] max-w-none">
                  <ellipse cx="66" cy="39" rx="63" ry="36" fill="none" stroke="#ff2600" strokeWidth="5" />
                </svg>
                <ul className="absolute top-[72px] right-0 z-10 rounded bg-white py-2 shadow-[0_12px_48px_16px_rgba(0,0,0,0.06),0_6px_32px_rgba(0,0,0,0.1)]">
                  <MenuItem label="Refresh dashboard" disabled />
                  <MenuItem label="Enter fullscreen" />
                  <li className="my-2 h-0.5 bg-[#f0f0f0]" />
                  <MenuItem label="Save as" active>
                    <svg viewBox="0 0 340 126" className="pointer-events-none absolute -top-[34px] -left-[59px] z-20 h-[126px] w-[340px] max-w-none">
                      <ellipse cx="170" cy="63" rx="167" ry="60" fill="none" stroke="#ff2600" strokeWidth="5" />
                    </svg>
                  </MenuItem>
                  <MenuItem label="Download" disabled arrow />
                  <MenuItem label="Share" disabled arrow />
                  <li className="my-2 h-0.5 bg-[#f0f0f0]" />
                  <MenuItem label="Set auto-refresh interval" />
                </ul>
              </div>
            </div>
          </div>

          {/* Cards */}
          <div className="grid min-h-0 flex-1 grid-cols-12 content-start gap-8 overflow-hidden px-16 pt-12">
            <Card title="# Calls (28 days)" span="col-span-3">
              <BigNumber value="104,995" caption="Calls in prev 28d," badge="-5.55% vs prior 28 Days" tone="bg-[#f4d7db]" />
            </Card>
            <Card title="Agent Locations (28 days)" span="col-span-4">
              <WorldMap />
            </Card>
            <Card title="# Calls (28 days) vs 28 days prior" span="col-span-5">
              <LineChart width={1247} left={127} max={800} step={200} points={CALLS_LINE} span={1226} />
            </Card>

            <Card title="% High CX Risk (28 days)" span="col-span-3">
              <BigNumber value="54.54%" caption="57,418 Calls prev 28d," badge="-19.73% vs prior 28 Days" tone="bg-[#e3f5ea]" />
            </Card>
            <Card title="CX Risk Breakdown (28 days)" span="col-span-4">
              <Donut />
            </Card>
            <Card title="CX Risk [by Severity] (28 days)" span="col-span-5">
              <BarChart width={1247} left={146} max={6000} step={1000} colors={[GREEN, AMBER, RED]} data={SEVERITY} />
            </Card>

            <Card title="# Agents (28 days)" span="col-span-2">
              <BigNumber value="334" caption="Agents prev 28d," badge="-2.62% vs prior 28 Days" tone="bg-[#f4d7db]" />
            </Card>
            <Card title="# Agents (28 days) vs 28 days prior" span="col-span-4">
              <LineChart width={979} left={126} max={250} step={50} points={AGENTS_LINE} span={1202} />
            </Card>
            <Card title="Agent Reported Issues (28 days)" span="col-span-2">
              <BigNumber value="883" badge="-20.95% vs prior 28 Days (1117)" tone="bg-[#f5f5f5]" />
            </Card>
            <Card title="Agent Reported Issues (28 days)" span="col-span-4">
              <BarChart
                width={979}
                left={113}
                max={70}
                step={10}
                colors={[AMBER, '#ff1cc4', '#a6b1bd', '#f67124', GREEN, RED, VIOLET, '#3077e0']}
                data={ISSUES}
              />
            </Card>

            <Card title="Browser Coverage (28 days)" span="col-span-2">
              <BigNumber value="94.03%" />
            </Card>
            <Card title="Operata Coverage (28 days)" span="col-span-4">
              <div className="mt-[18px] flex h-[38px] items-center justify-between px-2.5 font-['Liberation_Sans',sans-serif] text-2xl">
                <div className="flex w-[690px] gap-5 overflow-hidden">
                  <LegendItem color="bg-[#109618]" label="Browser &amp; Cloud" />
                  <LegendItem color="bg-[#dc3912]" label="Cloud Only" />
                  <LegendItem color="bg-[#ff9900]" label="Missed Call" />
                  <LegendItem color="bg-[#faa61a]" />
                </div>
                <div className="flex items-center gap-5">
                  <button type="button" aria-label="Previous legend page">
                    <svg viewBox="0 0 18 30" className="block h-[30px] w-[18px]">
                      <path d="M18 0v30L0 15z" fill="#aaa" />
                    </svg>
                  </button>
                  1/2
                  <button type="button" aria-label="Next legend page">
                    <svg viewBox="0 0 18 30" className="block h-[30px] w-[18px]">
                      <path d="M0 0v30l18-15z" fill="#2f4554" />
                    </svg>
                  </button>
                </div>
                <LegendSelectors />
              </div>
              <BarChart width={979} left={146} top={33} max={7000} step={1000} colors={['#109618', '#dc3912', '#ff9900']} data={COVERAGE} />
            </Card>
            <Card title="Missed Calls (28 days)" span="col-span-2" />
            <Card title="#Missed Call [by cause] (28 days)" span="col-span-4">
              <div className="mt-[18px] flex h-[38px] items-center justify-end gap-5 px-2.5 font-['Liberation_Sans',sans-serif] text-2xl">
                <LegendItem color="bg-[#109618]" label="No Error Log Entry" />
                <LegendItem color="bg-[#dc3912]" label="Error Log Entry" />
                <LegendSelectors />
              </div>
              <BarChart width={979} left={126} top={33} max={120} step={20} colors={['#109618', '#dc3912']} data={MISSED} />
            </Card>
          </div>
        </main>
      </div>
    </div>
  );
}
